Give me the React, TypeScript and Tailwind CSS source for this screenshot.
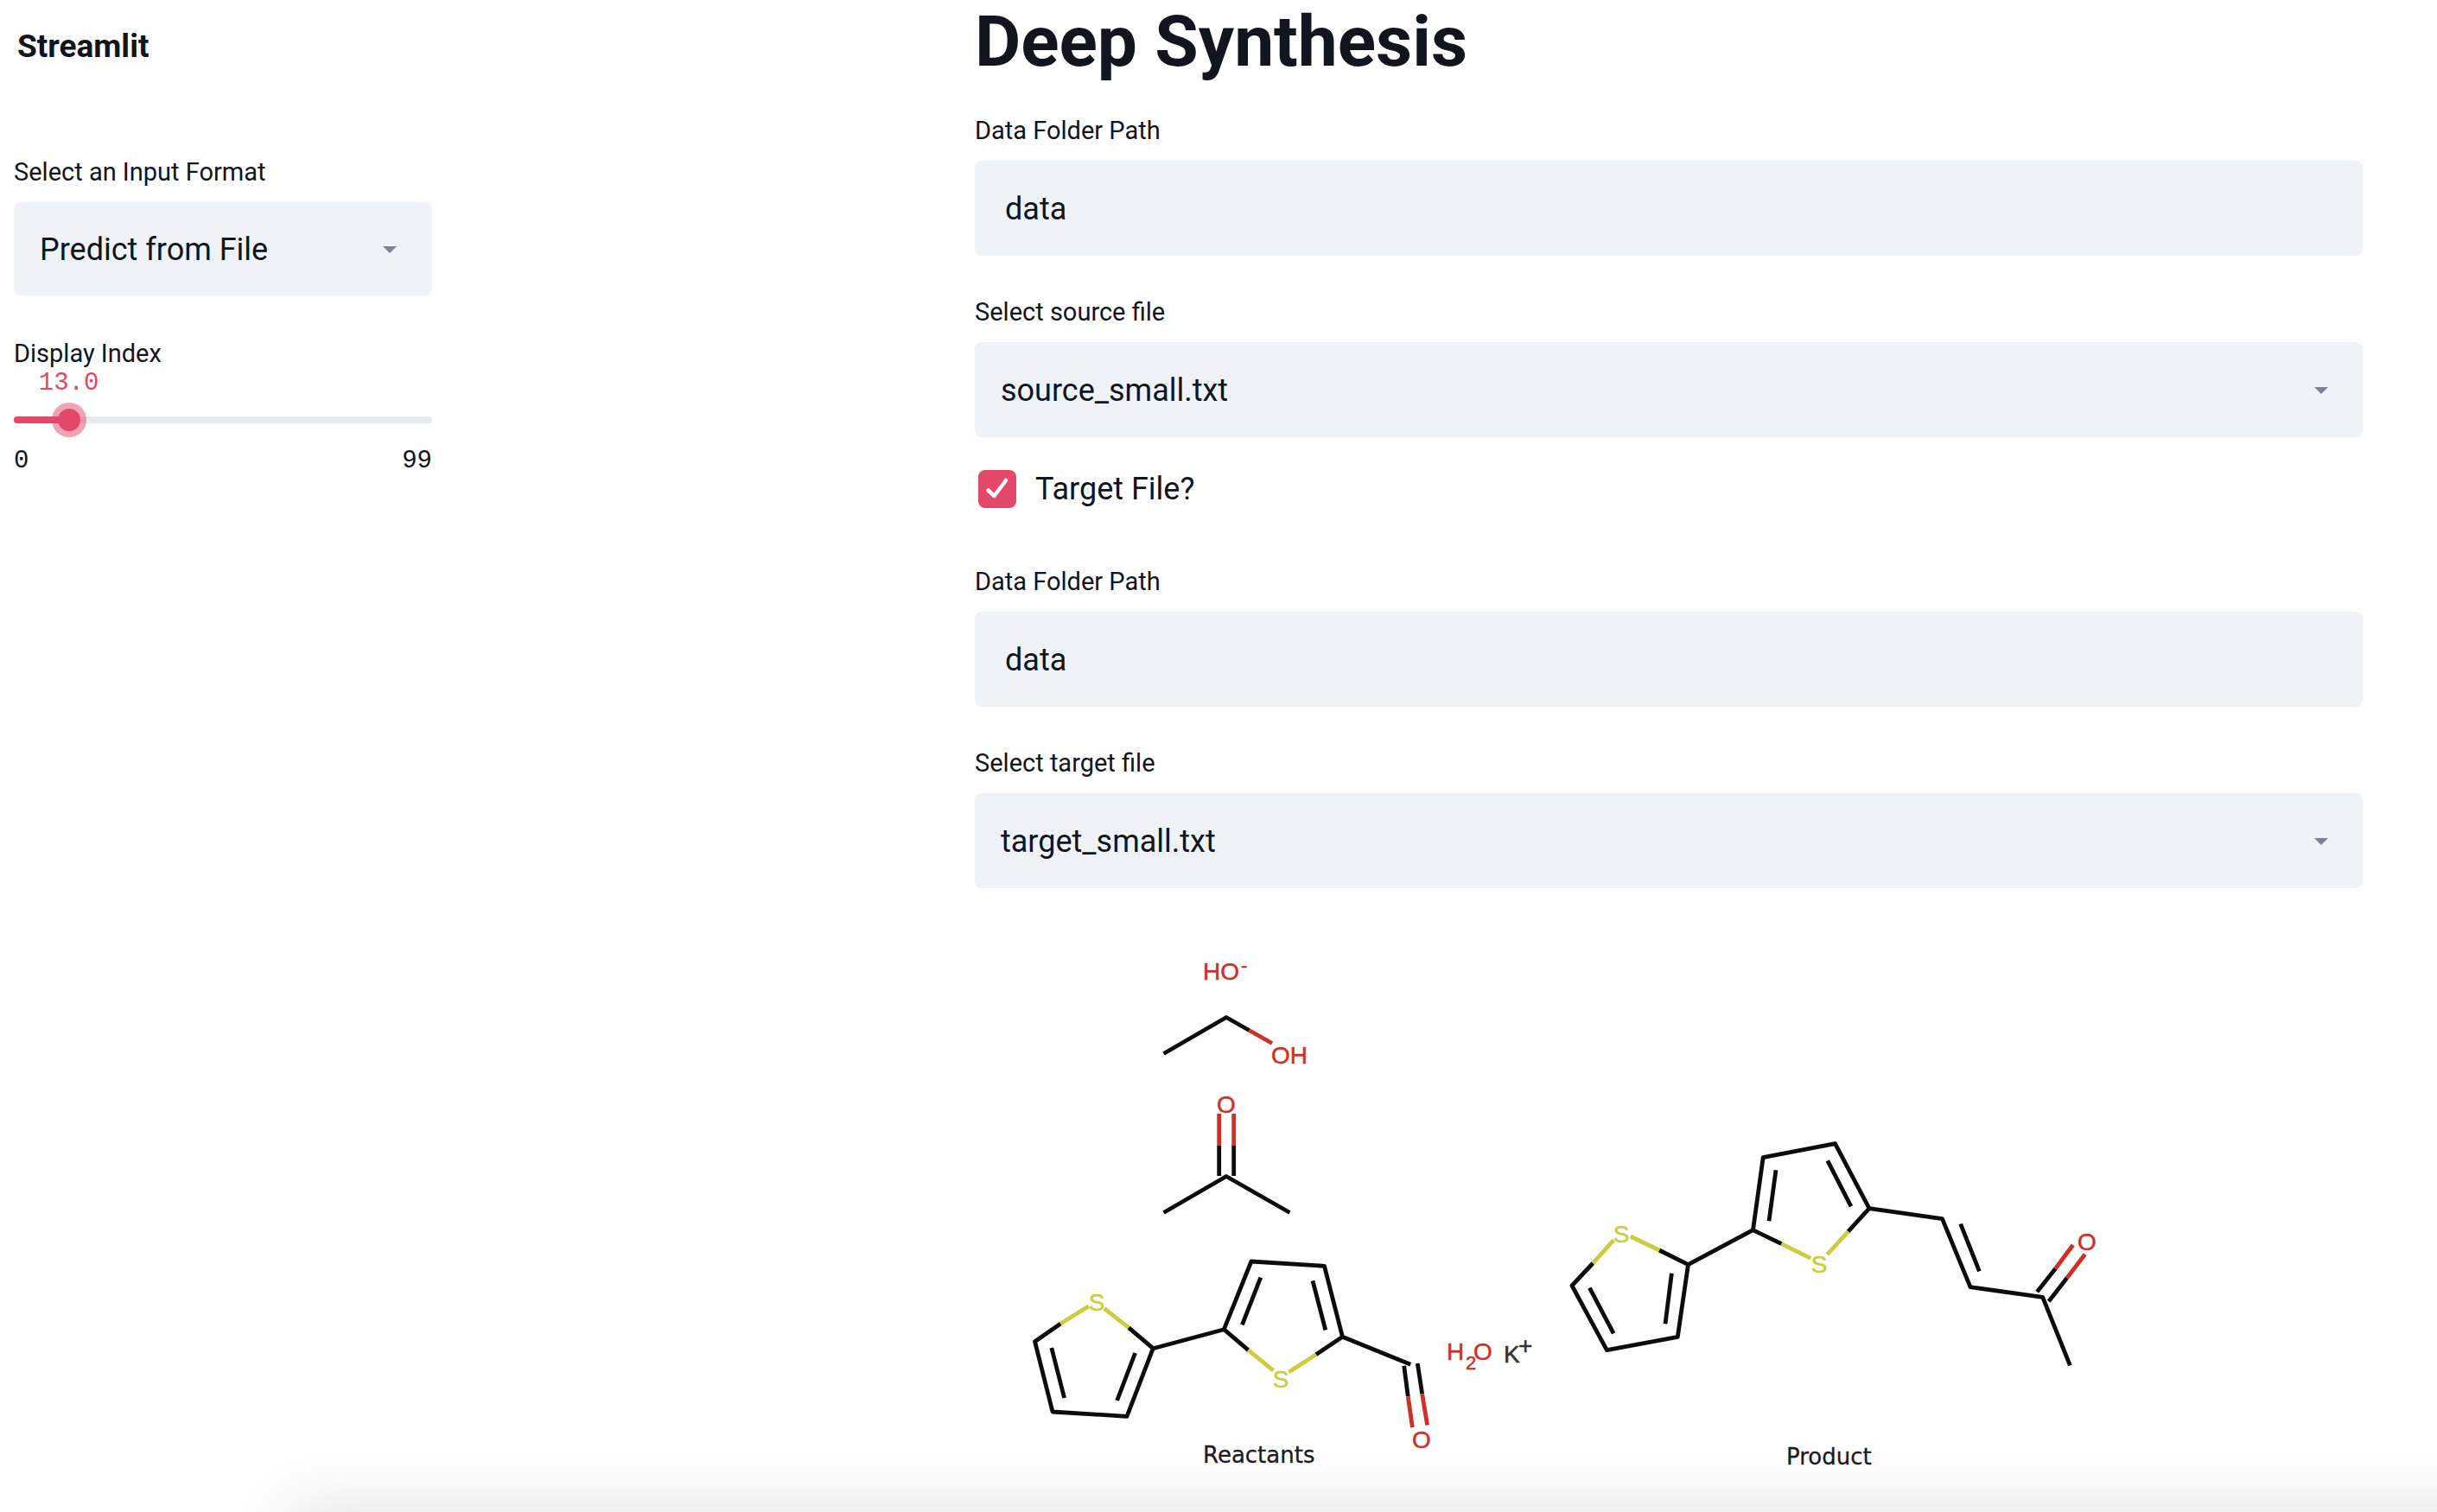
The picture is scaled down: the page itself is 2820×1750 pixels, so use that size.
import { useId, useState } from 'react';
import type { ReactNode } from 'react';

const BLACK = '#0c0c0c';
const RED = '#cf2f27';
const YELLOW = '#cccc3d';

function Field({ id, label, children }: { id: string; label: string; children: ReactNode }) {
  return (
    <div className="flex flex-col gap-4">
      <label htmlFor={id} className="text-[29px] leading-[38px]">
        {label}
      </label>
      {children}
    </div>
  );
}

function SelectBox({
  label,
  options,
  size,
  caret,
}: {
  label: string;
  options: string[];
  size: string;
  caret: string;
}) {
  const id = useId();
  const [value, setValue] = useState(options[0]);
  return (
    <Field id={id} label={label}>
      <div className="relative">
        <select
          id={id}
          value={value}
          onChange={(e) => setValue(e.target.value)}
          className={`block w-full appearance-none rounded-lg bg-[#eff2f7] pt-0.5 pr-20 pl-[30px] text-[36px] outline-none ${size}`}
        >
          {options.map((o) => (
            <option key={o}>{o}</option>
          ))}
        </select>
        <svg
          viewBox="0 0 16 8"
          aria-hidden="true"
          className={`pointer-events-none absolute top-0.5 bottom-0 my-auto h-2 w-4 fill-[#7b8495] ${caret}`}
        >
          <path d="M0 0H16L8 8Z" />
        </svg>
      </div>
    </Field>
  );
}

function TextBox({ label, initial }: { label: string; initial: string }) {
  const id = useId();
  const [value, setValue] = useState(initial);
  return (
    <Field id={id} label={label}>
      <input
        id={id}
        type="text"
        value={value}
        onChange={(e) => setValue(e.target.value)}
        className="h-[110px] w-full rounded-lg bg-[#eff2f7] px-[35px] pt-0.5 text-[36px] outline-none"
      />
    </Field>
  );
}

function IndexSlider() {
  const id = useId();
  const min = 0;
  const max = 99;
  const [value, setValue] = useState(13);
  const percent = `${((value - min) / (max - min)) * 100}%`;
  return (
    <div className="flex flex-col">
      <label htmlFor={id} className="text-[29px] leading-[38px]">
        Display Index
      </label>
      <div className="relative h-[38px] font-[Liberation_Mono,monospace] text-[29px] leading-8 text-[#e34868]">
        <output htmlFor={id} className="absolute -translate-x-1/2" style={{ left: percent }}>
          {value.toFixed(1)}
        </output>
      </div>
      <div className="grid h-10 items-center">
        <div className="h-2 overflow-hidden rounded-full bg-[#e6e9ee] [grid-area:1/1]">
          <div className="h-full bg-[#e34868]" style={{ width: percent }} />
        </div>
        <input
          id={id}
          type="range"
          min={min}
          max={max}
          value={value}
          onChange={(e) => setValue(Number(e.target.value))}
          className="-mx-[13px] h-10 appearance-none bg-transparent outline-none [grid-area:1/1] [&::-webkit-slider-thumb]:size-[26px] [&::-webkit-slider-thumb]:appearance-none [&::-webkit-slider-thumb]:rounded-full [&::-webkit-slider-thumb]:bg-[#e34868] [&::-webkit-slider-thumb]:shadow-[0_0_0_7px_rgba(227,72,104,0.5)]"
        />
      </div>
      <div className="flex justify-between pt-2.5 font-[Liberation_Mono,monospace] text-[29px] leading-[36px]">
        <span>{min}</span>
        <span>{max}</span>
      </div>
    </div>
  );
}

function TargetToggle() {
  const [checked, setChecked] = useState(true);
  return (
    <label className="flex w-fit items-center gap-[22px] pl-1 text-[36px] leading-[44px]">
      <span className="grid size-11">
        <input
          type="checkbox"
          checked={checked}
          onChange={(e) => setChecked(e.target.checked)}
          className="size-11 appearance-none rounded-lg bg-[#e6e9ee] [grid-area:1/1] checked:bg-[#e34868]"
        />
        {checked && (
          <svg
            viewBox="0 0 44 44"
            aria-hidden="true"
            className="pointer-events-none size-11 fill-none stroke-white [grid-area:1/1]"
            strokeWidth="4.500"
            strokeLinecap="round"
            strokeLinejoin="round"
          >
            <path d="M11.500 23.500L18.500 30L32 12" />
          </svg>
        )}
      </span>
      Target File?
    </label>
  );
}

function Bonds({ color, d }: { color: string; d: string }) {
  return <path d={d} stroke={color} strokeWidth="4.800" fill="none" strokeLinejoin="round" />;
}

function Atom({
  x,
  y,
  color,
  size = 28,
  anchor = 'middle',
  children,
}: {
  x: number;
  y: number;
  color: string;
  size?: number;
  anchor?: 'start' | 'middle';
  children: string;
}) {
  return (
    <text
      x={x}
      y={y}
      fill={color}
      stroke={color}
      strokeWidth="0.500"
      fontSize={size}
      textAnchor={anchor}
      fontFamily="Liberation Sans, Arial, sans-serif"
    >
      {children}
    </text>
  );
}

function ReactionChart() {
  return (
    <svg viewBox="1128 1068 1606 660" className="block w-full" role="img" aria-label="Reactants and product structures">
      <Atom x={1392} y={1134} color={RED} anchor="start">HO</Atom>
      <Atom x={1436} y={1125} color={RED} size={22} anchor="start">-</Atom>

      <Bonds color={BLACK} d="M1346.500 1219.500L1419 1177.500L1445.500 1192.500" />
      <Bonds color={RED} d="M1445.500 1192.500L1472 1207.500" />
      <Atom x={1471} y={1231} color={RED} anchor="start">OH</Atom>

      <Atom x={1419} y={1288} color={RED}>O</Atom>
      <Bonds color={RED} d="M1410.700 1289V1326M1427.700 1289V1326" />
      <Bonds color={BLACK} d="M1410.700 1326V1361M1427.700 1326V1361M1346.500 1403.500L1419 1361.500L1492.500 1403.500" />

      <Bonds
        color={BLACK}
        d="M1227.300 1532L1197.500 1552.700L1218 1634L1304 1639.300L1334.300 1560.700L1306 1536.700M1216.800 1560L1231.600 1618M1313.600 1566L1292.600 1621M1334.300 1560.700L1416.300 1538.700M1444.500 1562.700L1416.300 1538.700L1447.900 1460L1532.500 1465.300L1553.500 1547.300L1522.800 1567.700M1458.800 1478.700L1437.400 1533.300M1519 1482.300L1533.800 1539.300M1553.500 1547.300L1632.300 1579.300M1624.700 1580.700L1629.300 1616.300M1640.300 1578L1645.700 1613.300"
      />
      <Bonds
        color={YELLOW}
        d="M1259.800 1511.700L1227.300 1532M1277.900 1514.300L1306 1536.700M1473.600 1586.300L1444.500 1562.700M1491.300 1588L1522.800 1567.700"
      />
      <Bonds color={RED} d="M1629.300 1616.300L1634.400 1652M1645.700 1613.300L1651.600 1649.300" />
      <Atom x={1269} y={1517} color={YELLOW}>S</Atom>
      <Atom x={1482} y={1606} color={YELLOW}>S</Atom>
      <Atom x={1645} y={1676} color={RED}>O</Atom>

      <Atom x={1674} y={1574} color={RED} anchor="start">H</Atom>
      <Atom x={1696} y={1585} color={RED} size={22} anchor="start">2</Atom>
      <Atom x={1705} y={1574} color={RED} anchor="start">O</Atom>
      <Atom x={1740} y={1577} color="#333333" anchor="start">K</Atom>
      <Atom x={1757} y={1567} color="#333333" size={28} anchor="start">+</Atom>

      <Bonds
        color={BLACK}
        d="M1843.300 1462L1819 1488L1859.400 1562.700L1941.300 1547.300L1953.500 1463.700L1920 1447M1839.400 1490.700L1867.200 1543.300M1934.400 1473.700L1927 1532.300M1953.500 1463.700L2028.500 1423.700M2061.500 1439.700L2028.500 1423.700L2040.200 1339.700L2123.500 1323.700L2163 1398.700L2138.600 1425.300M2055 1354.300L2047 1413.300M2114.800 1343.300L2142 1396.300M2163 1398.700L2247.500 1410.700L2280 1489.700L2363.700 1501.300L2395.400 1580.300M2268.700 1416.700L2290.400 1471.300M2357.200 1495.300L2378.500 1468.300M2370.700 1506.300L2391.900 1479"
      />
      <Bonds
        color={YELLOW}
        d="M1867.200 1435.300L1843.300 1462M1886.700 1431L1920 1447M2095.300 1456.300L2061.500 1439.700M2114.400 1452L2138.600 1425.300"
      />
      <Bonds color={RED} d="M2378.500 1468.300L2398.800 1441M2391.900 1479L2412.700 1451.700" />
      <Atom x={1876} y={1438} color={YELLOW}>S</Atom>
      <Atom x={2105} y={1473} color={YELLOW}>S</Atom>
      <Atom x={2415} y={1447} color={RED}>O</Atom>

      <g fontFamily="DejaVu Sans, sans-serif" fontSize="26" fill="#1c1c1c" stroke="#1c1c1c" strokeWidth="0.300">
        <text x="1392" y="1693">Reactants</text>
        <text x="2067" y="1695">Product</text>
      </g>
    </svg>
  );
}

export default function App() {
  return (
    <div className="relative min-h-screen overflow-hidden bg-[#fefefe] font-[Roboto,sans-serif] text-[#11151d]">
      <div className="grid grid-cols-[2fr_3fr]">
        <aside className="w-[500px] pl-4">
          <header className="pt-8 pl-1">
            <a href="/" className="block text-[37px] leading-[44px] font-bold">
              Streamlit
            </a>
          </header>
          <div className="flex flex-col gap-12 pt-[104px]">
            <SelectBox
              label="Select an Input Format"
              options={['Predict from File', 'Predict from String']}
              size="h-[108px]"
              caret="right-[41px]"
            />
            <IndexSlider />
          </div>
        </aside>
        <main className="pr-[86px]">
          <h1 className="text-[82px] leading-[96px] font-bold">Deep Synthesis</h1>
          <div className="flex flex-col gap-[46px] pt-9">
            <TextBox label="Data Folder Path" initial="data" />
            <SelectBox label="Select source file" options={['source_small.txt']} size="h-[110px]" caret="right-10" />
          </div>
          <div className="pt-[38px] pb-[66px]">
            <TargetToggle />
          </div>
          <div className="flex flex-col gap-[46px]">
            <TextBox label="Data Folder Path" initial="data" />
            <SelectBox label="Select target file" options={['target_small.txt']} size="h-[110px]" caret="right-10" />
          </div>
          <div className="pt-10">
            <ReactionChart />
          </div>
        </main>
      </div>
      <div
        aria-hidden="true"
        className="pointer-events-none absolute top-full -right-24 left-[340px] h-40 shadow-[0_0_76px_rgba(0,0,0,0.13)]"
      />
    </div>
  );
}
